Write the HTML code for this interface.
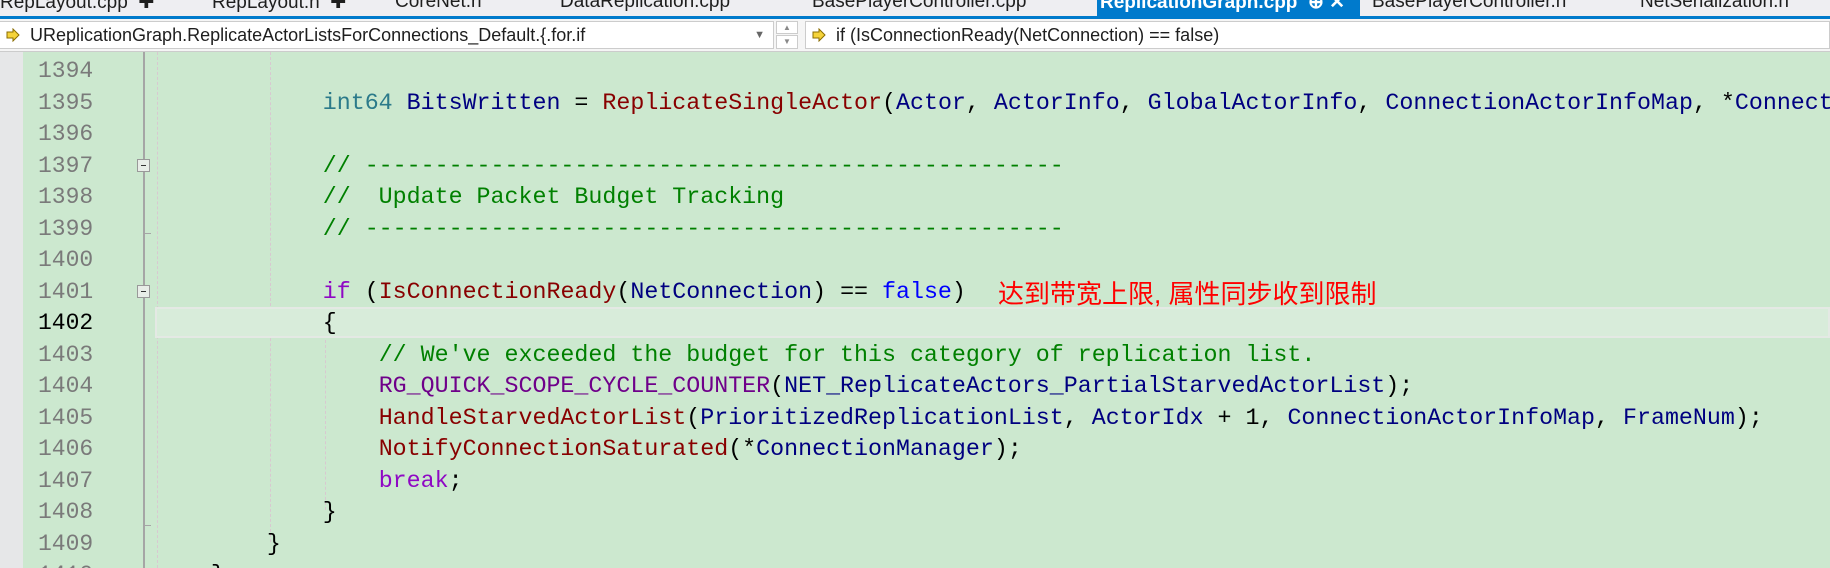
<!DOCTYPE html>
<html style="width:1830px;height:568px;overflow:hidden"><head><meta charset="utf-8"><style>
*{margin:0;padding:0;box-sizing:border-box}
body{width:1830px;height:568px;overflow:hidden;background:#cce8cf;position:relative;font-family:"Liberation Sans",sans-serif}
.tabs{position:absolute;left:0;top:0;width:1830px;height:16px;background:#eeeef2;overflow:hidden}
.tab{position:absolute;top:-9px;font-size:19px;color:#1e1e1e;white-space:nowrap}
.blue{position:absolute;top:16px;left:0;width:1830px;height:3px;background:#007acc}
.nav{position:absolute;top:19px;left:0;width:1830px;height:33px;background:#f5f5f5;border-bottom:1px solid #ccc;overflow:hidden}
.box{position:absolute;top:2px;height:28px;background:#fff;border:1px solid #ccc;font-size:18px;line-height:26px;color:#1e1e1e;padding-left:30px;white-space:nowrap}
.arr{position:absolute;left:6px;top:6px;width:14px;height:14px}
.strip{position:absolute;left:0;top:52px;width:23px;height:516px;background:#e6e7e8}
.ln{position:absolute;left:38px;font-family:"Liberation Mono",monospace;font-size:23px;color:#7a7a7a;line-height:31.5px}
.code{position:absolute;left:155px;width:1675px;height:512px;overflow:hidden;font-family:"Liberation Mono",monospace;font-size:23.3px;line-height:31.5px;white-space:pre;color:#000}
.c{color:#008000}.k{color:#8f08c4}.t{color:#2b7a8a}.v{color:#000080}.f{color:#880000}.m{color:#6f008a}.b{color:#0000ff}
.fold{position:absolute;left:137px;width:13px;height:13px;border:1px solid #999;background:#e8ede8}
.fold:after{content:"";position:absolute;left:3px;top:5px;width:5px;height:1px;background:#333}
</style></head><body>
<div class="tabs">
<div class="tab" style="left:0">RepLayout.cpp &nbsp;✚</div>
<div class="tab" style="left:212px">RepLayout.h &nbsp;✚</div>
<div class="tab" style="left:395px">CoreNet.h</div>
<div class="tab" style="left:560px">DataReplication.cpp</div>
<div class="tab" style="left:812px">BasePlayerController.cpp</div>
<div style="position:absolute;left:1097px;top:0;width:263px;height:16px;background:#007acc"></div>
<div class="tab" style="left:1100px;color:#fff;font-weight:bold">ReplicationGraph.cpp &nbsp;⊕ ✕</div>
<div class="tab" style="left:1372px">BasePlayerController.h</div>
<div class="tab" style="left:1640px">NetSerialization.h</div>
</div>
<div class="blue"></div>
<div class="nav">
<div class="box" style="left:0;width:774px;border-left:none"><svg class="arr" viewBox="0 0 14 14"><path d="M1 4h6V1l6 6-6 6v-3H1z" fill="#f5d33a" stroke="#8a6d00" stroke-width="1"/></svg>UReplicationGraph.ReplicateActorListsForConnections_Default.{.for.if<span style="position:absolute;right:8px;top:0;font-size:11px;color:#666">▼</span></div>
<div style="position:absolute;left:776px;top:2px;width:22px;height:13px;border:1px solid #ccc;background:#fff;font-size:8px;color:#888;text-align:center;line-height:12px">▲</div>
<div style="position:absolute;left:776px;top:16px;width:22px;height:14px;border:1px solid #ccc;background:#fff;font-size:8px;color:#888;text-align:center;line-height:12px">▼</div>
<div class="box" style="left:805px;width:1025px"><svg class="arr" viewBox="0 0 14 14"><path d="M1 4h6V1l6 6-6 6v-3H1z" fill="#f5d33a" stroke="#8a6d00" stroke-width="1"/></svg>if (IsConnectionReady(NetConnection) == false)</div>
</div>
<div class="strip"></div>
<div style="position:absolute;left:143px;top:52px;width:2px;height:516px;background:#a5a5a5"></div>
<div style="position:absolute;left:157px;top:52px;height:516px;border-left:1px dashed #d8c8d0"></div>
<div style="position:absolute;left:270px;top:52px;height:490px;border-left:1px dashed #d8c8d0"></div>
<div style="position:absolute;left:325px;top:340px;height:170px;border-left:1px dashed #d8c8d0"></div>
<div style="position:absolute;left:155px;top:307px;width:1675px;height:31px;border:2px solid #e4e9e4;background:#d8ecda"></div>
<div class="fold" style="top:159px"></div>
<div class="fold" style="top:285px"></div>
<div style="position:absolute;left:143px;top:233px;width:8px;height:1px;background:#a5a5a5"></div>
<div style="position:absolute;left:143px;top:525px;width:8px;height:1px;background:#a5a5a5"></div>
<div class="ln" style="top:56px">1394<br>1395<br>1396<br>1397<br>1398<br>1399<br>1400<br>1401<br><span style="color:#000">1402</span><br>1403<br>1404<br>1405<br>1406<br>1407<br>1408<br>1409<br>1410</div>
<div class="code" style="top:56px">
            <span class="t">int64</span> <span class="v">BitsWritten</span> = <span class="f">ReplicateSingleActor</span>(<span class="v">Actor</span>, <span class="v">ActorInfo</span>, <span class="v">GlobalActorInfo</span>, <span class="v">ConnectionActorInfoMap</span>, *<span class="v">ConnectionManager</span>

            <span class="c">// --------------------------------------------------</span>
            <span class="c">//  Update Packet Budget Tracking</span>
            <span class="c">// --------------------------------------------------</span>

            <span class="k">if</span> (<span class="f">IsConnectionReady</span>(<span class="v">NetConnection</span>) == <span class="b">false</span>)
            {
                <span class="c">// We've exceeded the budget for this category of replication list.</span>
                <span class="m">RG_QUICK_SCOPE_CYCLE_COUNTER</span>(<span class="v">NET_ReplicateActors_PartialStarvedActorList</span>);
                <span class="f">HandleStarvedActorList</span>(<span class="v">PrioritizedReplicationList</span>, <span class="v">ActorIdx</span> + 1, <span class="v">ConnectionActorInfoMap</span>, <span class="v">FrameNum</span>);
                <span class="f">NotifyConnectionSaturated</span>(*<span class="v">ConnectionManager</span>);
                <span class="k">break</span>;
            }
        }
    }</div>
<div style="position:absolute;left:998px;top:274px;font-family:'Liberation Sans','Noto Sans CJK SC',sans-serif;font-size:26px;color:#f00;white-space:nowrap">达到带宽上限, 属性同步收到限制</div>
</body></html>
